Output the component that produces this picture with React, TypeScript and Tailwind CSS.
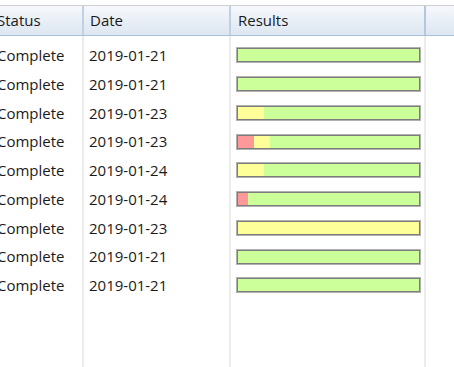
import React from "react";

type Seg = { red: number; yellow: number };
const rows: { date: string; seg: Seg }[] = [
  { date: "2019-01-21", seg: { red: 0, yellow: 0 } },
  { date: "2019-01-21", seg: { red: 0, yellow: 0 } },
  { date: "2019-01-23", seg: { red: 0, yellow: 26 } },
  { date: "2019-01-23", seg: { red: 16, yellow: 16 } },
  { date: "2019-01-24", seg: { red: 0, yellow: 26 } },
  { date: "2019-01-24", seg: { red: 10, yellow: 0 } },
  { date: "2019-01-23", seg: { red: 0, yellow: 183 } },
  { date: "2019-01-21", seg: { red: 0, yellow: 0 } },
  { date: "2019-01-21", seg: { red: 0, yellow: 0 } },
];

function Bar({ seg }: { seg: Seg }) {
  return (
    <div className="w-[185px] h-[16px] border border-[#b0b0b0]">
      <div className="w-full h-full border border-[#7c7c7c] bg-[#ccff99] flex">
        {seg.red > 0 && <div className="h-full bg-[#ff9999]" style={{ width: seg.red }} />}
        {seg.yellow > 0 && <div className="h-full bg-[#ffff99]" style={{ width: seg.yellow }} />}
      </div>
    </div>
  );
}

export default function App() {
  const font = { fontFamily: '"Open Sans", "Noto Sans", sans-serif' };
  return (
    <div className="w-[454px] h-[367px] bg-white overflow-hidden relative text-[15px] text-[#1a1a1a]" style={font}>
      <div className="pt-[5px] -ml-[8px] flex flex-col h-full">
        {/* header */}
        <div className="flex h-[31px] border-t border-[#cfcfcf] border-b border-b-[#a9bfd8] bg-gradient-to-b from-[#f6f8fc] to-[#dde6f1]">
          <div className="w-[92px] pl-[5px] flex items-center border-r-2 border-[#c0d1e4]">Status</div>
          <div className="w-[147px] pl-[6px] flex items-center border-r-2 border-[#c0d1e4]">Date</div>
          <div className="w-[195px] pl-[7px] flex items-center border-r-2 border-[#b3c8df]">Results</div>
          <div className="flex-1" />
        </div>
        {/* body */}
        <div className="flex flex-1">
          <div className="w-[92px] border-r-2 border-[#ececec] pt-[5px]">
            {rows.map((r, i) => (
              <div key={i} className="h-[28.75px] flex items-center pl-[5px]">Complete</div>
            ))}
          </div>
          <div className="w-[147px] border-r-2 border-[#ececec] pt-[5px]">
            {rows.map((r, i) => (
              <div key={i} className="h-[28.75px] flex items-center pl-[5px]">{r.date}</div>
            ))}
          </div>
          <div className="w-[195px] border-r-2 border-[#ececec] pt-[5px]">
            {rows.map((r, i) => (
              <div key={i} className="h-[28.75px] flex items-center pl-[5px]">
                <Bar seg={r.seg} />
              </div>
            ))}
          </div>
          <div className="flex-1" />
        </div>
      </div>
    </div>
  );
}
